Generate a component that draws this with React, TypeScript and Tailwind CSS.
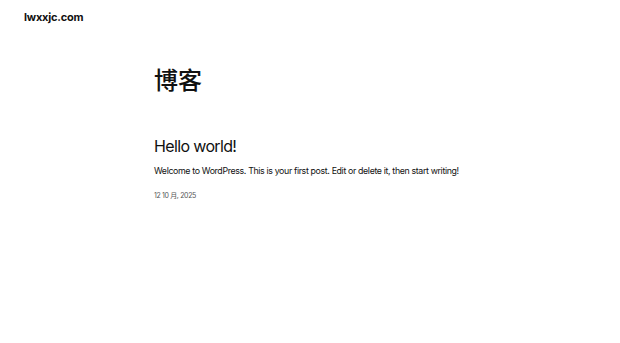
export default function App() {
  return (
    <div className="min-h-[343px] bg-white text-[#111111]" style={{ fontFamily: 'Inter, "Noto Sans CJK SC", sans-serif' }}>
      <header className="px-[24px] pt-[10px]">
        <a className="block text-[11px] font-bold leading-[14px] tracking-[-0.02em]">lwxxjc.com</a>
      </header>
      <main className="mx-auto w-[312px] pt-[40px]">
        <h1 className="text-[24px] font-medium leading-[30px]" style={{ fontFamily: '"Noto Sans CJK SC", sans-serif' }}>博客</h1>
        <article className="pt-[41px]">
          <h2 className="text-[16px] font-normal leading-[22px] tracking-[-0.04em]">Hello world!</h2>
          <p className="mt-[7px] text-[8.8px] leading-[13px] tracking-[-0.04em]">
            Welcome to WordPress. This is your first post. Edit or delete it, then start writing!
          </p>
          <div className="mt-[14px] text-[7px] leading-[10px] tracking-[-0.05em] text-[#555555]">12 10 月, 2025</div>
        </article>
      </main>
    </div>
  );
}
